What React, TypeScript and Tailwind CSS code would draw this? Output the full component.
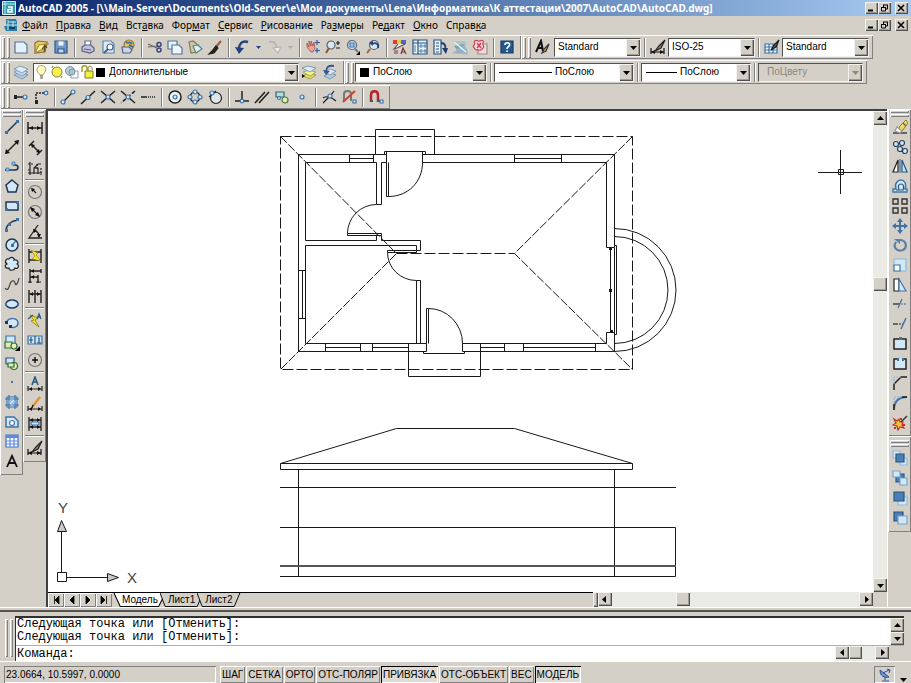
import React, { useState } from 'react';
import type { FC, ReactNode } from 'react';

const RAISED = 'bg-[#d4d0c8] shadow-[inset_1px_1px_0_#ffffff,inset_-1px_-1px_0_#808080]';
const BUTTON = 'bg-[#d4d0c8] shadow-[inset_1px_1px_0_#f4f2ee,inset_-1px_-1px_0_#505050,inset_-2px_-2px_0_#a09c94]';

const NAVY = '#1d3557';
const BLUE = '#3f73a8';
const PALE = '#d3e8f7';
const SKY = '#8fb8dc';

const icons: Record<string, ReactNode> = {
  // standard
  New: <path d="M2 3h9l3 3v8H2z" fill="#e4f0fa" stroke="#53749c" />,
  Open: (
    <>
      <path d="M2 4l3-2 9 1-2 10-10 1z" fill="#e9c95c" stroke="#8a7433" />
      <path d="M2 14L6 6l9-1-5 5z" fill="#fff2b0" stroke="#a88c3c" />
      <path d="M9 10l3-4 2 3M12 7l-1 6" stroke="#5b4a1d" />
    </>
  ),
  Save: (
    <>
      <path d="M2 2h12v12H2z" fill="#6d98c8" stroke="#33588a" />
      <path d="M5 2h6v5H5z" fill="#eef5fb" stroke="#7d9cc0" />
      <path d="M5 10h6v4H5z" fill="#c5d9ee" stroke="#33588a" />
    </>
  ),
  Plot: (
    <>
      <path d="M5 7V2h6l-1 5" fill="#fff" stroke="#6a6d92" />
      <path d="M2 8l3-2h6l3 3v3l-4 2-8-2z" fill="#c2c4df" stroke="#5a5d85" />
      <path d="M4 10l7 1" stroke="#5a5d85" />
    </>
  ),
  Preview: (
    <>
      <path d="M3 2h8l3 3v9H3z" fill="#dcebf7" stroke="#6584a6" />
      <circle cx="10" cy="8" r="3" fill="#fff" stroke="#44658f" />
      <path d="M8 10l-4 4" stroke="#44658f" strokeWidth="2" />
    </>
  ),
  Publish: (
    <>
      <circle cx="9" cy="6" r="5" fill="#f0c64c" stroke="#9b7a2b" />
      <path d="M6 3c2 2 4-1 6 2M9 6l4 2" stroke="#3f73a8" strokeWidth="2" />
      <path d="M2 8h7l3 3-2 3H3z" fill="#c8d5ec" stroke="#4d6490" />
    </>
  ),
  Cut: (
    <>
      <path d="M1 5l9 4M1 8l10-1" stroke="#666" />
      <circle cx="12" cy="5.500" r="2" stroke="#3b4478" strokeWidth="1.500" />
      <circle cx="12" cy="11" r="2" stroke="#3b4478" strokeWidth="1.500" />
    </>
  ),
  Copy: (
    <>
      <path d="M1 2h9v8H1z" fill="#e4f0fa" stroke="#53749c" />
      <path d="M5 6h7l3 3v6H5z" fill="#eef6fc" stroke="#53749c" />
    </>
  ),
  Paste: (
    <>
      <path d="M2 3l4-1 5 4-1 7-6 1z" fill="#cfc7a4" stroke="#807a58" />
      <path d="M6 7l5-1 4 4-6 4z" fill="#dff1f0" stroke="#5a8a88" />
    </>
  ),
  Match: (
    <>
      <path d="M14 2L8 9" stroke="#9a5b2d" strokeWidth="2" />
      <path d="M9 7l2 2-4 5-5 1 3-3z" fill="#222" />
    </>
  ),
  Undo: (
    <>
      <path d="M14 3C8 1 5 5 5 10" stroke="#22427c" strokeWidth="2.400" />
      <path d="M1 8l4 7 5-6z" fill="#22427c" stroke="none" />
    </>
  ),
  Redo: (
    <>
      <path d="M3 3c5-1 8 2 8 7" stroke="#b8b8b8" strokeWidth="2" />
      <path d="M7 9l5 5 3-6z" fill="#ececec" stroke="#b8b8b8" />
    </>
  ),
  Pan: (
    <>
      <path d="M2 4l2 4V2l2 5V2l2 5 1-4 1 6-2 4H6L2 8z" fill="#e9a59a" stroke="#a84b44" strokeWidth=".8" />
      <path d="M12 1v5M10 3.500h5M12 9v5M10 11.500h5" stroke="#2d5c9e" />
    </>
  ),
  ZoomRealtime: (
    <>
      <circle cx="6" cy="6" r="4" fill="#d8e6f2" stroke="#53606e" />
      <path d="M4 9l-3 5" stroke="#8a5a31" strokeWidth="2" />
      <path d="M11 4h4M13 2v4M11 9h4" stroke="#222" />
    </>
  ),
  ZoomWindow: (
    <>
      <circle cx="7" cy="6" r="4.500" fill="#d8e6f2" stroke="#53606e" />
      <path d="M5 4h4v4H5z" stroke={BLUE} fill="#a9cce6" />
      <path d="M10 10l3 3" stroke="#5d7ba3" strokeWidth="2" />
      <path d="M15 12v4h-4z" fill="#000" stroke="none" />
    </>
  ),
  ZoomPrevious: (
    <>
      <circle cx="9" cy="6" r="4.500" fill="#d8e6f2" stroke="#53606e" />
      <path d="M5 10l-3 4" stroke="#9a6838" strokeWidth="2" />
      <path d="M13 9c1-4-2-6-6-4" stroke="#22427c" strokeWidth="1.800" />
      <path d="M4 4l4-2v5z" fill="#22427c" stroke="none" />
    </>
  ),
  Properties: (
    <>
      <path d="M1 1h4v4H1z" fill="#e23b3b" stroke="none" />
      <path d="M5 1h4v4H5z" fill="#e8cf3b" stroke="none" />
      <path d="M9 1h5v4H9z" fill="#4c62d0" stroke="none" />
      <path d="M13 5L5 9l-3 1 4-5" fill="#eee" stroke="#555" />
      <path d="M2 12h4M2 14h4M9 15l2-6 3 6M10 13h3" stroke="#7c2f3c" />
    </>
  ),
  DesignCenter: (
    <>
      <path d="M1 1h14v14H1z" fill="#e8f1f8" stroke="#27557f" />
      <path d="M6 1v14M1 4h14" stroke="#27557f" />
      <path d="M3 6v7M8 6h2v2H8zM12 6h2v2h-2zM8 11h2v2H8zM12 11h2v2h-2z" stroke="#3f73a8" strokeWidth=".9" />
    </>
  ),
  ToolPalettes: (
    <>
      <path d="M2 1h7v14H2z" fill="#e8f1f8" stroke="#27557f" />
      <path d="M4 4h3M4 7h3M4 10h3M4 13h3" stroke="#27557f" />
      <path d="M9 4c4 0 5 3 4 7" stroke="#1e3c70" strokeWidth="1.800" />
      <path d="M10 9l4 6 2-6z" fill="#1e3c70" stroke="none" />
    </>
  ),
  SheetSet: (
    <>
      <path d="M1 2l12 0 2 4-11 1z" fill="#a9c6cf" stroke="none" />
      <path d="M2 7l10-2 2 4-9 2z" fill="#7fa0ad" stroke="none" />
      <path d="M1 14l11-7 3 4v4z" fill="#8fb1c4" stroke="#a8bcc6" />
      <path d="M2 3l12 10" stroke="#f4f7f8" />
    </>
  ),
  Markup: (
    <>
      <path d="M6 5h9v10H6z" fill="#eadcdc" stroke="#a38c8c" />
      <path d="M3 2c2-2 3 1 5 0s4-1 3 2 2 3 0 5-2 3-4 2-3 1-4-1-3-2-1-4-1-2 1-4z" fill="#f9dfe2" stroke="#d03f52" />
      <path d="M5 4l4 5M9 4L5 9" stroke="#d03f52" strokeWidth="1.500" />
    </>
  ),
  Help: (
    <>
      <path d="M2 2h12v12H2z" fill="#24598f" stroke="#143a66" />
      <path d="M6 6c0-3 5-3 4.500 0C10 8 8 8 8 10M8 11.500v1.500" stroke="#fff" strokeWidth="1.700" />
    </>
  ),
  TextStyle: (
    <>
      <path d="M2 13L7 2l2 10M4 9h5" stroke="#111" strokeWidth="2" />
      <path d="M15 5l-5 5-2 4 4-2z" fill="#b8a07c" stroke="#333" />
    </>
  ),
  DimStyle: (
    <>
      <path d="M1 9v6M14 9v6M1 13h13" stroke="#111" />
      <path d="M1 13l4-2v4zM14 13l-4-2v4z" fill="#111" stroke="none" />
      <path d="M15 1L9 7l-4 5 6-3z" fill="#8d8577" stroke="#222" />
    </>
  ),
  TableStyle: (
    <>
      <path d="M1 5h12v9H1z" fill="#eef6fc" stroke="#3f73a8" />
      <path d="M1 8h12M5 5v9M9 5v9M1 11h12" stroke="#3f73a8" />
      <path d="M15 1l-5 5-3 5 5-3z" fill="#555" stroke="#222" />
    </>
  ),
  // layers
  Layers: (
    <>
      <path d="M1 11l6-3 8 3-6 4z" fill="#b6cde2" stroke="#5d7fa3" strokeWidth=".7" />
      <path d="M1 8l6-3 8 3-6 4z" fill="#c9dcec" stroke="#5d7fa3" strokeWidth=".7" />
      <path d="M1 5l6-3 8 3-6 4z" fill="#dcebf6" stroke="#5d7fa3" strokeWidth=".7" />
    </>
  ),
  LayerCurrent: (
    <>
      <path d="M2 12l6-3 7 2-6 4z" fill="#e7e05a" stroke="#8c8a31" strokeWidth=".7" />
      <path d="M2 8l6-2 7 2-6 4z" fill="#f7f39a" stroke="#8c8a31" strokeWidth=".7" />
      <path d="M1 4l6-2 8 2-6 4z" fill="#dcebf6" stroke="#5d7fa3" strokeWidth=".7" />
      <path d="M1 10v4l3-2z" fill="#111" stroke="none" />
    </>
  ),
  LayerPrevious: (
    <>
      <path d="M3 12l6-3 6 2-6 4z" fill="#b6cde2" stroke="#5d7fa3" strokeWidth=".7" />
      <path d="M3 8l6-3 6 2-6 4z" fill="#dcebf6" stroke="#5d7fa3" strokeWidth=".7" />
      <path d="M13 2C8 1 5 3 5 8" stroke="#2f568e" strokeWidth="1.800" />
      <path d="M2 6l3 5 4-4z" fill="#2f568e" stroke="none" />
    </>
  ),
  // object snap
  TempTrack: (
    <>
      <path d="M1 8h9" strokeWidth="1.500" />
      <path d="M1 6h3v4H1z" fill="#222" stroke="none" />
      <circle cx="12" cy="8" r="2" fill={PALE} stroke={BLUE} />
    </>
  ),
  SnapFrom: (
    <>
      <path d="M3 13V4h8" strokeDasharray="2 1" strokeWidth="1.500" />
      <path d="M2 11h3v4H2z" fill="#222" stroke="none" />
      <circle cx="13" cy="4" r="1.800" fill={PALE} stroke={BLUE} />
    </>
  ),
  Endpoint: (
    <>
      <path d="M3 13L13 3" />
      <circle cx="13" cy="3" r="2" fill={PALE} stroke={BLUE} />
      <circle cx="3" cy="13" r="2" fill={PALE} stroke={BLUE} />
    </>
  ),
  Midpoint: (
    <>
      <path d="M1 15L15 2" strokeWidth="1.500" />
      <circle cx="8" cy="8.500" r="2" fill={PALE} stroke={BLUE} />
    </>
  ),
  Intersection: (
    <>
      <path d="M1 2l14 12M15 2L1 14" strokeWidth="1.500" />
      <circle cx="8" cy="8" r="2" fill={PALE} stroke={BLUE} />
    </>
  ),
  ApparentIntersect: (
    <>
      <path d="M1 2l14 12" strokeWidth="1.500" />
      <path d="M15 2L1 14" strokeWidth="1.500" strokeDasharray="4 2" />
      <circle cx="8" cy="8" r="2" fill={PALE} stroke={BLUE} />
    </>
  ),
  Extension: <path d="M1 8h6M8 8h1M10 8h1M12 8h1M14 8h1" strokeWidth="1.500" />,
  Center: (
    <>
      <circle cx="8" cy="8" r="6" fill="#eef4f8" stroke="#222" strokeWidth="1.500" />
      <circle cx="8" cy="8" r="2" fill={PALE} stroke={BLUE} />
    </>
  ),
  Quadrant: (
    <>
      <circle cx="8" cy="8" r="5" />
      <circle cx="8" cy="3" r="2" fill={PALE} stroke={BLUE} />
      <circle cx="8" cy="13" r="2" fill={PALE} stroke={BLUE} />
      <circle cx="3" cy="8" r="2" fill={PALE} stroke={BLUE} />
      <circle cx="13" cy="8" r="2" fill={PALE} stroke={BLUE} />
    </>
  ),
  Tangent: (
    <>
      <circle cx="9" cy="9" r="5.500" fill="#dfe6ea" stroke="#222" />
      <path d="M2 8l7-6" />
      <circle cx="5" cy="4" r="2" fill={PALE} stroke={BLUE} />
    </>
  ),
  Perpendicular: (
    <>
      <path d="M8 2v10M1 12h14" strokeWidth="1.500" />
      <circle cx="8" cy="12" r="1.800" fill={PALE} stroke={BLUE} />
    </>
  ),
  Parallel: <path d="M1 14L11 3M5 14L15 3" strokeWidth="1.600" />,
  SnapInsert: (
    <>
      <path d="M2 3h8v5H2z" fill="#b9dbe8" stroke="#2f6f5c" />
      <circle cx="11" cy="11" r="3" fill="#dcebb4" stroke="#4f7d3a" />
      <circle cx="5" cy="9" r="1.500" fill={PALE} stroke={BLUE} />
    </>
  ),
  Node: <circle cx="8" cy="8" r="2" fill={PALE} stroke={BLUE} />,
  Nearest: (
    <>
      <path d="M2 14L10 6l3-4M2 9c5-3 9 0 13 3" />
      <circle cx="9" cy="7" r="2" fill={PALE} stroke={BLUE} />
    </>
  ),
  SnapNone: (
    <>
      <path d="M3 12V5c0-4 7-4 7 0v7" stroke="#777" strokeWidth="2" />
      <path d="M14 2L2 13" stroke="#c9462c" strokeWidth="2" />
      <path d="M12 11h3v3h-3z" fill={PALE} stroke={BLUE} />
    </>
  ),
  SnapSettings: (
    <>
      <path d="M3 13V6c0-5 7-5 7 0v7" stroke="#b3262c" strokeWidth="2.500" />
      <path d="M2 12h3M9 12h3" stroke="#555" strokeWidth="2" />
      <path d="M12 11h3v3h-3z" fill={PALE} stroke={BLUE} />
    </>
  ),
  // draw
  Line: (
    <>
      <path d="M3 13L13 3" stroke={NAVY} strokeWidth="1.500" />
      <path d="M1 12h3v3H1zM12 1h3v3h-3z" fill={BLUE} stroke="none" />
    </>
  ),
  XLine: (
    <>
      <path d="M2 14L14 2" strokeWidth="1.500" />
      <path d="M1 15l1-5 4 4zM15 1l-5 1 4 4z" fill="#111" stroke="none" />
    </>
  ),
  Polyline: (
    <>
      <path d="M1 12h10c4 0 4-5 0-5H9" stroke={NAVY} strokeWidth="1.500" />
      <path d="M2 10h3v3H2zM8 4h3v3H8z" fill={SKY} stroke={BLUE} strokeWidth=".7" />
    </>
  ),
  Polygon: <path d="M8 2l6 5-2 7H4L2 7z" fill={PALE} stroke={NAVY} strokeWidth="1.500" />,
  Rectangle: (
    <>
      <path d="M2 4h12v8H2z" fill={PALE} stroke={NAVY} strokeWidth="1.500" />
      <path d="M1 10h3v3H1zM12 3h3v3h-3z" fill={BLUE} stroke="none" />
    </>
  ),
  Arc: (
    <>
      <path d="M2 14C2 8 7 4 14 3" stroke={NAVY} strokeWidth="1.500" />
      <path d="M1 12h3v3H1zM12 1h3v3h-3zM4 6h3v3H4z" fill={BLUE} stroke="none" />
    </>
  ),
  Circle: (
    <>
      <circle cx="8" cy="8" r="6" fill={PALE} stroke={NAVY} strokeWidth="1.500" />
      <path d="M8 8l4-4" stroke={BLUE} />
      <path d="M7 7h3v3H7z" fill={BLUE} stroke="none" />
    </>
  ),
  RevCloud: (
    <path d="M5 3c2-3 6-1 5 1 4-1 5 3 3 4 3 1 1 6-2 4-1 3-6 3-6 0-4 1-5-3-2-4-3-2-1-6 2-5z" fill={PALE} stroke="#222" />
  ),
  Spline: <path d="M1 12c3 4 4-1 5-4s4-5 5-1 3 0 4-5" stroke="#444" />,
  Ellipse: (
    <>
      <ellipse cx="8" cy="8" rx="6" ry="4" fill={PALE} stroke={NAVY} strokeWidth="1.500" />
      <path d="M1 7h2v3H1zM13 7h2v3h-2zM7 3h2v2H7z" fill={BLUE} stroke="none" />
    </>
  ),
  EllipseArc: (
    <>
      <path d="M3 6c3-4 11-3 11 2 0 4-4 5-8 4" fill={PALE} stroke={BLUE} strokeWidth="1.500" />
      <path d="M1 6h3v3H1zM5 10h3v3H5z" fill={NAVY} stroke="none" />
    </>
  ),
  InsertBlock: (
    <>
      <path d="M2 1h9v8H2z" fill={PALE} stroke={BLUE} />
      <path d="M1 7h7v6H1z" fill="#d7edb1" stroke="#346b3a" />
      <circle cx="10" cy="11" r="3" fill="#e7f2b0" stroke="#346b3a" />
      <path d="M16 11v5h-5z" fill="#000" stroke="none" />
    </>
  ),
  MakeBlock: (
    <>
      <path d="M2 3h8v6H2z" fill={PALE} stroke="#27557f" />
      <circle cx="10" cy="11" r="3.500" fill="#e7f2b0" stroke="#346b3a" />
      <path d="M4 8h6v4H4z" fill="#d7edb1" stroke="#346b3a" />
    </>
  ),
  Point: <path d="M7 7h2v2H7z" fill={BLUE} stroke="none" />,
  Hatch: (
    <>
      <path d="M3 3h10v10H3z" fill={PALE} stroke={BLUE} />
      <path d="M1 5h14M1 11h14M5 1v14M11 1v14" stroke={BLUE} />
      <path d="M5 9l4-4M7 11l4-4" stroke={SKY} />
    </>
  ),
  Region: (
    <>
      <path d="M2 13V3h8l4 4v6z" fill={PALE} stroke={BLUE} strokeWidth="1.500" />
      <circle cx="8" cy="9" r="2.500" fill="#fff" stroke={BLUE} />
    </>
  ),
  Table: (
    <>
      <path d="M2 2h12v12H2z" fill="#fff" stroke="#3f73d0" />
      <path d="M2 2h12v3H2z" fill="#5a8be0" stroke="none" />
      <path d="M2 8h12M2 11h12M6 2v12M10 2v12" stroke="#5a8be0" />
    </>
  ),
  MText: <path d="M3 14L8 3l5 11M5 10h6" stroke="#111" strokeWidth="1.800" />,
  // dimension
  DimLinear: (
    <>
      <path d="M1 2v12M15 2v12M1 8h14" strokeWidth="1.500" />
      <path d="M2 8l4-2v4zM14 8l-4-2v4z" fill="#111" stroke="none" />
    </>
  ),
  DimAligned: (
    <>
      <path d="M2 6l5-5M10 15l5-5M4 4l8 8" strokeWidth="1.500" />
      <path d="M4 4l4 1-3 3zM13 13l-4-1 3-3z" fill="#111" stroke="none" />
    </>
  ),
  DimOrdinate: (
    <>
      <path d="M3 2v13M1 13h14M7 14V8h4v6M7 8l4-4h3" />
      <path d="M1 4h5M10 4v6M14 8v7M1 10h2" strokeDasharray="2 1" />
    </>
  ),
  DimRadius: (
    <>
      <circle cx="8" cy="8" r="6.500" stroke="#777" />
      <path d="M9 9L5 5" />
      <path d="M4 4l4 1-3 3z" fill="#111" stroke="none" />
    </>
  ),
  DimDiameter: (
    <>
      <circle cx="8" cy="8" r="6.500" stroke="#777" />
      <path d="M4 4l8 8" />
      <path d="M3 3l5 2-3 3zM13 13l-5-2 3-3z" fill="#111" stroke="none" />
    </>
  ),
  DimAngular: (
    <>
      <path d="M11 1L2 14h13M7 7c3 0 5 2 5 6" strokeWidth="1.300" />
      <path d="M6 5l4 1-3 3zM12 14l-2-4h4z" fill="#111" stroke="none" />
    </>
  ),
  QuickDim: (
    <>
      <path d="M2 1v14M14 1v14M2 4h12M2 12h12" strokeWidth="1.400" />
      <path d="M4 2l7 3-2 2 5 6-9-2 3-3z" fill="#f3e32a" stroke="#8a7d10" strokeWidth=".6" />
    </>
  ),
  Baseline: (
    <>
      <path d="M3 1v14M14 1v4M3 3h11M3 9h8M11 7v8" strokeWidth="1.400" />
      <path d="M4 3l3-2v4zM4 9l3-2v4z" fill="#111" stroke="none" />
      <path d="M1 14h4M9 14h5" />
    </>
  ),
  ContinueDim: (
    <>
      <path d="M2 2v13M8 2v13M14 2v13M2 6h12" strokeWidth="1.400" />
      <path d="M3 6l3-2v4zM13 6l-3-2v4z" fill="#111" stroke="none" />
    </>
  ),
  QuickLeader: (
    <>
      <path d="M3 3l8 3-3 2 4 7-8-6 3-1z" fill="#f3e32a" stroke="#8a7d10" strokeWidth=".8" />
      <path d="M1 7l5-4M10 7l2-5 2 5M11 5h3" stroke="#315c7c" strokeWidth="1.300" />
    </>
  ),
  Tolerance: (
    <>
      <path d="M1 4h14v8H1z" fill="#cfe3f5" stroke="#3f73a8" />
      <path d="M8 4v8M4 5v6M2 8h4M11 6h1v5M10 11h4" stroke="#27557f" />
    </>
  ),
  CenterMark: (
    <>
      <circle cx="8" cy="8" r="6.500" stroke="#777" />
      <path d="M8 5v6M5 8h6" stroke="#111" strokeWidth="1.500" />
    </>
  ),
  DimEdit: (
    <>
      <path d="M1 10v5M15 10v5M1 13h14" />
      <path d="M2 13l3-2v4zM14 13l-3-2v4z" fill="#111" stroke="none" />
      <path d="M5 9l3-8 3 8M6 6h4" stroke="#27557f" strokeWidth="1.500" />
    </>
  ),
  DimTextEdit: (
    <>
      <path d="M1 10v5M15 10v5M1 13h14" />
      <path d="M2 13l3-2v4zM14 13l-3-2v4z" fill="#111" stroke="none" />
      <path d="M13 1L6 10" stroke="#e0952e" strokeWidth="2.500" />
      <path d="M6 9l-1 3" stroke="#222" strokeWidth="1.500" />
    </>
  ),
  DimUpdate: (
    <>
      <path d="M2 1v14M14 1v14M2 4h12M2 11h12" strokeWidth="1.300" />
      <path d="M4 6h8v3H4z" fill="#cfe3f5" stroke="#3f73a8" />
      <path d="M3 4l3-2v4zM13 4l-3-2v4zM3 11l3-2v4zM13 11l-3-2v4z" fill="#111" stroke="none" />
    </>
  ),
  // modify
  Erase: (
    <>
      <path d="M1 14h14" />
      <path d="M14 1L8 7l-2 4 4 1 6-8z" fill="#f5d95b" stroke="#7a6020" strokeWidth=".8" />
      <path d="M5 8l5 4-2 2-5-2z" fill="#fff" stroke="#999" />
      <path d="M11 4l3 3" stroke="#5b6f8c" strokeWidth="1.500" />
    </>
  ),
  CopyObject: (
    <>
      <circle cx="4" cy="5" r="2.500" fill={PALE} stroke="#27405c" />
      <circle cx="10" cy="4" r="2.500" fill={PALE} stroke="#27405c" />
      <circle cx="8" cy="10" r="2.500" fill={PALE} stroke="#27405c" />
      <circle cx="13" cy="12" r="2.500" fill={PALE} stroke="#27405c" />
    </>
  ),
  Mirror: (
    <>
      <path d="M6 2v12H1z" fill="#fff" stroke="#222" />
      <path d="M10 2v12h5z" fill={PALE} stroke="#27557f" />
      <path d="M8 1v14" stroke={BLUE} />
    </>
  ),
  Offset: (
    <>
      <path d="M1 14v-3h3c-2-6 2-9 5-9s6 3 4 9h2v3z" fill={PALE} stroke={BLUE} strokeWidth="1.400" />
      <path d="M4 12h7c1-3 1-6-2-6-3 0-3 3-2 6" stroke="#27557f" />
    </>
  ),
  Array: <path d="M1 1h5v5H1zM10 1h5v5h-5zM1 10h5v5H1zM10 10h5v5h-5z" stroke="#333" strokeWidth="1.400" />,
  Move: (
    <>
      <path d="M8 3v10M3 8h10" stroke={BLUE} strokeWidth="2" />
      <path d="M8 0l3 4H5zM8 16l3-4H5zM0 8l4-3v6zM16 8l-4-3v6z" fill={BLUE} stroke="none" />
    </>
  ),
  Rotate: (
    <>
      <path d="M4 5c-4 6 2 10 7 8 5-3 3-10-3-10" stroke="#5b82a9" strokeWidth="2.200" />
      <path d="M2 2h6v5z" fill="#5b82a9" stroke="none" />
    </>
  ),
  Scale: (
    <>
      <path d="M2 2h12v12H2z" fill={PALE} stroke={SKY} />
      <path d="M2 8h6v6H2z" fill="#fff" stroke={BLUE} />
    </>
  ),
  Stretch: (
    <>
      <path d="M2 2h5v12H2z" fill="#fff" stroke="#222" />
      <path d="M7 2l7 12H7z" fill={PALE} stroke={BLUE} />
    </>
  ),
  Trim: (
    <>
      <path d="M1 8h7" />
      <path d="M9 8h6" strokeDasharray="2 1" stroke={BLUE} />
      <path d="M6 12l4-9" stroke={BLUE} />
    </>
  ),
  Extend: (
    <>
      <path d="M1 8h5" />
      <path d="M7 8h4" strokeDasharray="2 1" />
      <path d="M9 13l5-11" stroke={BLUE} strokeWidth="1.500" />
    </>
  ),
  BreakPoint: (
    <>
      <path d="M2 3h12v10H2z" fill={PALE} stroke="#222" strokeWidth="1.500" />
      <path d="M7 1h3v3H7z" fill={BLUE} stroke="none" />
    </>
  ),
  Break: (
    <>
      <path d="M5 3H2v10h12V3h-3" fill={PALE} stroke="#222" strokeWidth="1.500" />
      <path d="M5 2h2v3H5zM10 2h2v3h-2z" fill={BLUE} stroke="none" />
    </>
  ),
  Chamfer: (
    <>
      <path d="M2 15V9l7-7h6" strokeWidth="1.500" />
      <path d="M2 9V2h7" stroke={SKY} strokeDasharray="2 1" />
    </>
  ),
  Fillet: (
    <>
      <path d="M2 15c0-8 4-13 13-13" stroke={BLUE} strokeWidth="2" />
      <path d="M2 15V9M10 2h5" strokeWidth="1.500" />
      <path d="M2 8V2h7" stroke={SKY} strokeDasharray="2 1" />
    </>
  ),
  Explode: (
    <>
      <path d="M2 4l3 2 2-2 1 3 3 0-1 3 2 3-4-1-2 3-1-4-4-1 3-2z" fill="#f3c43a" stroke="#c2362b" />
      <path d="M10 9h3v2h-3zM2 12h2v2H2zM8 3h2v2H8z" fill="#c2362b" stroke="none" />
      <path d="M15 1l-6 6" stroke="#333" strokeWidth="1.500" />
    </>
  ),
  // draw order
  BringFront: (
    <>
      <path d="M1 1h7v7H1zM8 8h7v7H8z" fill={PALE} stroke={SKY} />
      <path d="M4 4h8v8H4z" fill="#4b7fb6" stroke="#27557f" />
    </>
  ),
  SendBack: (
    <>
      <path d="M4 4h8v8H4z" fill="#4b7fb6" stroke="#27557f" />
      <path d="M1 1h7v6H1zM8 8h7v7H8z" fill={PALE} stroke="#7ba4c9" />
    </>
  ),
  BringAbove: (
    <>
      <path d="M6 7h9v8H6z" fill={PALE} stroke={SKY} />
      <path d="M2 2h10v9H2z" fill="#4b7fb6" stroke="#27557f" />
    </>
  ),
  SendUnder: (
    <>
      <path d="M2 2h9v9H2z" fill="#4b7fb6" stroke="#27557f" />
      <path d="M6 6h9v8H6z" fill={PALE} stroke="#7ba4c9" />
    </>
  ),
};

const Icon: FC<{ name: string }> = ({ name }) => (
  <svg width="16" height="16" viewBox="0 0 16 16" fill="none" stroke="#222" strokeWidth="1.200" aria-hidden="true">
    {icons[name]}
  </svg>
);

const ToolButton: FC<{ name: string; size?: string }> = ({ name, size = 'h-5' }) => (
  <button type="button" aria-label={name} className={`flex w-5 shrink-0 items-center justify-center ${size}`}>
    <Icon name={name} />
  </button>
);

const ToolGroup: FC<{ names: string[]; size?: string }> = ({ names, size }) => (
  <>
    {names.map((name) => (
      <ToolButton key={name} name={name} size={size} />
    ))}
  </>
);

const Grip: FC = () => (
  <div className="mr-px flex h-[21px] w-2 shrink-0 gap-[2px]">
    <div className={`w-[3px] ${RAISED}`} />
    <div className={`w-[3px] ${RAISED}`} />
  </div>
);

const Sep: FC = () => (
  <div className="flex w-[7px] shrink-0 justify-center">
    <div className="h-[19px] w-[2px] border-l border-[#808080] bg-white" />
  </div>
);

const FlyoutArrow: FC<{ name: string; color: string }> = ({ name, color }) => (
  <button type="button" aria-label={name} className="flex w-3 shrink-0 items-center justify-center">
    <svg width="5" height="3" viewBox="0 0 5 3">
      <path d="M0 0h5L2.500 3z" fill={color} />
    </svg>
  </button>
);

const Toolbar: FC<{ children: ReactNode; className?: string }> = ({ children, className = '' }) => (
  <div className={`flex h-[24px] shrink-0 items-center pl-[2px] ${RAISED} ${className}`}>{children}</div>
);

const Arrow: FC<{ dir: 'up' | 'down' | 'left' | 'right'; color?: string }> = ({ dir, color = '#000' }) => {
  const shapes = {
    up: 'M0 5h7L3.500 1z',
    down: 'M0 2h7L3.500 6z',
    left: 'M5 0v7L1 3.500z',
    right: 'M2 0v7l4-3.500z',
  };
  return (
    <svg width="7" height="7" viewBox="0 0 7 7" aria-hidden="true">
      <path d={shapes[dir]} fill={color} />
    </svg>
  );
};

const ScrollButton: FC<{ dir: 'up' | 'down' | 'left' | 'right'; label: string; className?: string }> = ({
  dir,
  label,
  className = 'h-[14px] w-[14px]',
}) => (
  <button type="button" aria-label={label} className={`flex shrink-0 items-center justify-center ${BUTTON} ${className}`}>
    <Arrow dir={dir} />
  </button>
);

interface ComboProps {
  label: string;
  value: string;
  className: string;
  textClass?: string;
  disabled?: boolean;
  children?: ReactNode;
}

const Combo: FC<ComboProps> = ({ label, value, className, textClass = 'pl-[3px]', disabled = false, children }) => (
  <div
    className={`relative h-[19px] shrink-0 border border-t-[#505050] border-r-[#f4f2ee] border-b-[#f4f2ee] border-l-[#505050] ${
      disabled ? 'bg-[#d4d0c8]' : 'bg-white'
    } ${className}`}
  >
    <select
      aria-label={label}
      disabled={disabled}
      className={`h-full w-full appearance-none bg-transparent pr-4 text-[10px] leading-4 outline-none ${
        disabled ? 'text-[#8c8880] opacity-100' : 'text-black'
      } ${textClass}`}
    >
      <option>{value}</option>
    </select>
    <div className="pointer-events-none absolute inset-y-0 left-0 flex items-center">{children}</div>
    <div
      className={`pointer-events-none absolute inset-y-0 right-0 flex w-[14px] items-center justify-center ${BUTTON}`}
    >
      <Arrow dir="down" color={disabled ? '#8c8880' : '#000'} />
    </div>
  </div>
);

const LayerState: FC = () => (
  <svg width="66" height="16" viewBox="0 0 66 16" fill="none" aria-hidden="true">
    <path d="M6 11C3 8 2 6 4 3c2-2 5-2 7 0 2 3 0 5-2 8z" fill="#fdfac0" stroke="#a8a25a" />
    <path d="M6 12h3M6 14h3" stroke="#555" />
    <circle cx="23" cy="8" r="5" fill="#f8f04a" stroke="#8a8440" />
    <path d="M19 2l-1 2M27 14l1-2" stroke="#8a8440" />
    <circle cx="36" cy="7" r="4.500" fill="#b7ccd4" stroke="#7b98a4" />
    <path d="M37 7h7v7h-7z" fill="#fff" stroke="#8da0a8" />
    <circle cx="38" cy="8" r="3" fill="#a8c3ce" stroke="#7b98a4" />
    <path d="M48 8V4c0-3 5-3 5 0v2" stroke="#a5a222" strokeWidth="1.500" />
    <path d="M51 7h8v7h-8z" fill="#f3ef3a" stroke="#7c7a20" />
    <path d="M54 7V4c1-3 5-2 4 2" stroke="#7c7a20" />
  </svg>
);

const WindowButtons: FC<{ target: string }> = ({ target }) => {
  const base = `flex h-[12px] w-[13px] items-center justify-center ${BUTTON}`;
  return (
    <div className="flex shrink-0 items-center">
      <button type="button" aria-label={`Minimize ${target}`} className={base}>
        <svg width="9" height="8" viewBox="0 0 9 8"><path d="M1 6.500h5" stroke="#000" strokeWidth="2" /></svg>
      </button>
      <button type="button" aria-label={`Restore ${target}`} className={base}>
        <svg width="9" height="8" viewBox="0 0 9 8" fill="none" stroke="#000">
          <path d="M3 1h5M3.500 1v2M7.500 1v4H6M1 3.500h5M1.500 3v4h4V3" />
        </svg>
      </button>
      <button type="button" aria-label={`Close ${target}`} className={`ml-1 ${base}`}>
        <svg width="9" height="8" viewBox="0 0 9 8"><path d="M1 1l6 6M7 1L1 7" stroke="#000" strokeWidth="1.600" /></svg>
      </button>
    </div>
  );
};

// [before, accelerator letter, after]
const menus: [string, string, string][] = [
  ['', 'Ф', 'айл'],
  ['', 'П', 'равка'],
  ['', 'В', 'ид'],
  ['Вст', 'а', 'вка'],
  ['Фор', 'м', 'ат'],
  ['', 'С', 'ервис'],
  ['', 'Р', 'исование'],
  ['Ра', 'з', 'меры'],
  ['Ре', 'д', 'акт'],
  ['', 'О', 'кно'],
  ['Справ', 'к', 'а'],
];

const drawTools = [
  'Line', 'XLine', 'Polyline', 'Polygon', 'Rectangle', 'Arc', 'Circle', 'RevCloud', 'Spline',
  'Ellipse', 'EllipseArc', 'InsertBlock', 'MakeBlock', 'Point', 'Hatch', 'Region', 'Table', 'MText',
];

const dimTools = [
  ['DimLinear', 'DimAligned', 'DimOrdinate'],
  ['DimRadius', 'DimDiameter', 'DimAngular'],
  ['QuickDim', 'Baseline', 'ContinueDim'],
  ['QuickLeader', 'Tolerance', 'CenterMark'],
  ['DimEdit', 'DimTextEdit', 'DimUpdate'],
  ['DimStyle'],
];

const modifyTools = [
  'Erase', 'CopyObject', 'Mirror', 'Offset', 'Array', 'Move', 'Rotate', 'Scale',
  'Stretch', 'Trim', 'Extend', 'BreakPoint', 'Break', 'Chamfer', 'Fillet', 'Explode',
];

const orderTools = ['BringFront', 'SendBack', 'BringAbove', 'SendUnder'];

const VGrip: FC = () => (
  <div className="mb-px flex w-full shrink-0 flex-col gap-px px-[2px]">
    <div className={`h-[3px] ${RAISED}`} />
    <div className={`h-[3px] ${RAISED}`} />
  </div>
);

const Drawing: FC = () => (
  <svg className="block h-full w-full" fill="none" stroke="#1a1a1a" role="img" aria-label="Floor plan and elevation">
    <g transform="translate(-48 -111)">
      {/* roof in plan */}
      <g strokeDasharray="11 3">
        <path d="M280.500 136.500H632.500V369.500H280.500Z" />
        <path d="M396.500 253.500H514.500" />
        <path d="M280.500 136.500L396.500 253.500L280.500 369.500M632.500 136.500L514.500 253.500L632.500 369.500" strokeDasharray="9 2" />
      </g>
      {/* porches */}
      <path d="M375.500 154.500V129.500H434.500V154.500M408.500 351.500V376.500H480.500V351.500" />
      <path d="M384.500 154V151.500H425.500V154M423.500 351V353.500H464.500V351" />
      {/* outer and inner walls */}
      <path d="M386.500 154.500H298.500V351.500H426.500V343.500M422.500 154.500H614.500V247.500H606.500V162.500H422.500" />
      <path d="M462.500 343.500V351.500H614.500V332.500H606.500V343.500H462.500" />
      <path d="M376.500 162.500H305.500V240.500H376.500V234.500M381.500 162.500H386.500" />
      <path d="M376.500 162.500V204.500H381.500V162.500M381.500 235.500V240.500H420.500V250.500H416.500V245.500H305.500V343.500H426.500" />
      <path d="M416.500 343.500V280.500H420.500V343.500" />
      {/* windows */}
      <path d="M349.500 154.500V162.500M373.500 154.500V162.500M349.500 158.500H373.500M514.500 154.500V162.500M561.500 154.500V162.500M514.500 158.500H561.500" />
      <path d="M298.500 270.500H305.500M298.500 318.500H305.500M302.500 270.500V318.500" />
      <path d="M325.500 343.500V351.500M360.500 343.500V351.500M325.500 347.500H360.500M372.500 343.500V351.500M408.500 343.500V351.500M372.500 347.500H408.500" />
      <path d="M480.500 343.500V351.500M504.500 343.500V351.500M480.500 347.500H504.500M523.500 343.500V351.500M595.500 343.500V351.500M523.500 347.500H595.500" />
      {/* doors */}
      <path d="M386.500 152V196.500H388.500V162.500M422.500 152V162.500C422.500 182 408 196.500 388.500 196.500" />
      <path d="M381.500 233.500H347.500V235.500H381.500ZM347.500 233.500A29 29 0 0 1 376.500 204.500" />
      <path d="M416.500 250.500H387.500V252.500H416.500ZM387.500 252.500A29 28 0 0 0 416.500 280.500" />
      <path d="M426.500 343.500V308.500H428.500V343.500M428.500 308.500A34 35 0 0 1 462.500 343.500" />
      {/* balcony */}
      <path d="M610.500 247.500V332.500M614.500 245.500H616.500V334.500H614.500V247.500" />
      <path d="M609 248h3v2h-3zM609 289h3v3h-3zM610 330h3v2h-3z" fill="#1a1a1a" stroke="none" />
      <path d="M614.500 228.500A61.500 61.500 0 0 1 614.500 351.500M614.500 236.500A53.500 53.500 0 0 1 614.500 343.500" />
      {/* elevation */}
      <path d="M280.500 463.500L396.500 428.500H514.500L632.500 463.500V469.500H280.500ZM280.500 463.500H632.500" />
      <path d="M298.500 469.500V576.500M614.500 469.500V576.500M280 487.500H676M280 527.500H675.500V576.500H280" />
      <path d="M280 566H676" stroke="#555" strokeWidth="2" />
      {/* UCS */}
      <path d="M57.500 572.500H66.500V581.500H57.500ZM61.500 572.500V532M66.500 577.500H107" />
      <path d="M61.500 520.500L57.500 531.500H66.500ZM118.500 577.500L107.500 573.500V581.500Z" fill="#c8c8c8" />
      <text x="58" y="513" fontSize="15" fill="#444" stroke="none">Y</text>
      <text x="127" y="583" fontSize="15" fill="#444" stroke="none">X</text>
      {/* cursor */}
      <path d="M840.500 150V194M818 172.500H862M838.500 169.500H843.500V174.500H838.500Z" />
    </g>
  </svg>
);

const SheetTab: FC<{ name: string; active: boolean; onClick: () => void }> = ({ name, active, onClick }) => (
  <button type="button" onClick={onClick} className="relative -ml-[6px] h-[14px] shrink-0 px-2 text-[10px] leading-[14px]">
    <svg
      className="absolute inset-0 h-full w-full"
      viewBox="0 0 50 14"
      preserveAspectRatio="none"
      fill={active ? '#fff' : '#d4d0c8'}
      stroke="#000"
      aria-hidden="true"
    >
      <path d="M0 0L6 13.500H43L49.500 0" />
    </svg>
    <span className="relative">{name}</span>
  </button>
);

const modes = [
  { name: 'ШАГ', on: false },
  { name: 'СЕТКА', on: false },
  { name: 'ОРТО', on: false },
  { name: 'ОТС-ПОЛЯР', on: false },
  { name: 'ПРИВЯЗКА', on: true },
  { name: 'ОТС-ОБЪЕКТ', on: false },
  { name: 'ВЕС', on: false },
  { name: 'МОДЕЛЬ', on: true },
];

const App: FC = () => {
  const [sheet, setSheet] = useState<string>('Модель');
  const [enabled, setEnabled] = useState<string[]>(modes.filter((m) => m.on).map((m) => m.name));

  const toggleMode = (name: string): void => {
    setEnabled((prev) => (prev.includes(name) ? prev.filter((m) => m !== name) : [...prev, name]));
  };

  return (
    <div className="flex h-screen w-full flex-col overflow-hidden bg-[#d4d0c8] font-['Liberation_Sans',sans-serif] text-[10px] text-black">
      {/* title bar */}
      <header className="flex h-4 shrink-0 items-center bg-linear-to-r from-[#0a246a] to-[#a6caf0] pr-[3px] pl-[2px]">
        <svg width="14" height="14" viewBox="0 0 14 14" fill="none" className="shrink-0" aria-hidden="true">
          <path d="M.5.500h13v13H.5z" fill="#2e9cae" stroke="#d9f0f4" />
          <path d="M3 1v12M1 3h12" stroke="#c2e8ee" />
          <path d="M6 6h4v5H6V8.500h4" stroke="#fff" strokeWidth="1.500" />
        </svg>
        <h1 className="ml-[2px] min-w-0 flex-1 font-['Noto_Sans',sans-serif] text-[10px] leading-4 font-bold whitespace-nowrap text-white">
          AutoCAD 2005 - [\\Main-Server\Documents\Old-Server\e\Мои документы\Lena\Информатика\К аттестации\2007\AutoCAD\AutoCAD.dwg]
        </h1>
        <WindowButtons target="AutoCAD" />
      </header>

      {/* menu */}
      <nav className="flex h-[18px] shrink-0 items-center pr-[3px] pl-1">
        <svg width="14" height="14" viewBox="0 0 14 14" fill="none" className="mr-1 shrink-0" aria-hidden="true">
          <path d="M2 1h10l1 3v9H2l-2-4 2-2z" fill="#2b7fa5" />
          <path d="M4 2v10M1 7h12M9 3v8M4 4h8" stroke="#bfe4f2" />
          <path d="M5 10h6" stroke="#0f3f66" strokeWidth="2" />
        </svg>
        <div className="flex flex-1 gap-2 font-['Noto_Sans',sans-serif]">
          {menus.map(([before, key, after]) => (
            <button key={before + key + after} type="button" className="leading-4">
              {before}
              <span className="underline">{key}</span>
              {after}
            </button>
          ))}
        </div>
        <WindowButtons target="drawing" />
      </nav>

      {/* toolbars */}
      <div className="flex shrink-0 flex-col gap-px pt-px">
        <div className="flex">
          <Toolbar className="pr-1">
            <Grip />
            <ToolGroup names={['New', 'Open', 'Save']} />
            <Sep />
            <ToolGroup names={['Plot', 'Preview', 'Publish']} />
            <Sep />
            <ToolGroup names={['Cut', 'Copy', 'Paste', 'Match']} />
            <Sep />
            <ToolButton name="Undo" />
            <FlyoutArrow name="Undo list" color="#22427c" />
            <ToolButton name="Redo" />
            <FlyoutArrow name="Redo list" color="#b0aca4" />
            <Sep />
            <ToolGroup names={['Pan', 'ZoomRealtime', 'ZoomWindow', 'ZoomPrevious']} />
            <Sep />
            <ToolGroup names={['Properties', 'DesignCenter', 'ToolPalettes', 'SheetSet', 'Markup']} />
            <Sep />
            <ToolButton name="Help" />
          </Toolbar>
          <Toolbar className="pr-1">
            <Grip />
            <ToolButton name="TextStyle" />
            <Combo label="Text style" value="Standard" className="ml-[2px] w-[87px]" />
            <Sep />
            <ToolButton name="DimStyle" />
            <Combo label="Dimension style" value="ISO-25" className="w-[87px]" />
            <Sep />
            <ToolButton name="TableStyle" />
            <Combo label="Table style" value="Standard" className="w-[87px]" />
          </Toolbar>
        </div>

        <div className="flex">
          <Toolbar className="pr-[5px]">
            <Grip />
            <ToolButton name="Layers" />
            <Combo label="Layer" value="Дополнительные" className="ml-[2px] w-[266px]" textClass="pl-[75px]">
              <LayerState />
              <span className="-ml-[4px] h-[9px] w-[9px] bg-black" />
            </Combo>
            <ToolGroup names={['LayerCurrent', 'LayerPrevious']} />
          </Toolbar>
          <Toolbar className="pr-1">
            <Grip />
            <Combo label="Color" value="ПоСлою" className="w-[132px]" textClass="pl-[17px]">
              <span className="ml-1 h-[9px] w-[9px] bg-black" />
            </Combo>
            <Sep />
            <Combo label="Linetype" value="ПоСлою" className="w-[140px]" textClass="pl-[60px]">
              <span className="ml-1 h-px w-[53px] bg-black" />
            </Combo>
            <Sep />
            <Combo label="Lineweight" value="ПоСлою" className="w-[110px]" textClass="pl-[38px]">
              <span className="ml-1 h-px w-[31px] bg-black" />
            </Combo>
            <Sep />
            <Combo label="Plot style" value="ПоЦвету" className="w-[105px]" textClass="pl-2" disabled />
          </Toolbar>
        </div>

        <div className="flex">
          <Toolbar className="pr-1">
            <Grip />
            <ToolGroup names={['TempTrack', 'SnapFrom']} />
            <Sep />
            <ToolGroup names={['Endpoint', 'Midpoint', 'Intersection', 'ApparentIntersect', 'Extension']} />
            <Sep />
            <ToolGroup names={['Center', 'Quadrant', 'Tangent']} />
            <Sep />
            <ToolGroup names={['Perpendicular', 'Parallel', 'SnapInsert', 'Node']} />
            <Sep />
            <ToolGroup names={['Nearest', 'SnapNone']} />
            <Sep />
            <ToolButton name="SnapSettings" />
          </Toolbar>
        </div>
      </div>

      {/* workspace */}
      <div className="flex min-h-0 flex-1">
        <aside className={`flex h-[366px] w-[23px] shrink-0 flex-col items-center pt-px pb-[5px] ${RAISED}`}>
          <VGrip />
          <div className="flex min-h-0 flex-1 flex-col justify-between">
            <ToolGroup names={drawTools} size="h-[18px]" />
          </div>
        </aside>
        <aside className={`flex w-[23px] shrink-0 flex-col items-center self-start pt-px pb-1 ${RAISED}`}>
          <VGrip />
          {dimTools.map((group, i) => (
            <React.Fragment key={group[0]}>
              {i > 0 && (
                <div className="flex h-1 w-full items-center px-[2px]">
                  <div className="h-[2px] w-full border-t border-[#808080] bg-white" />
                </div>
              )}
              <ToolGroup names={group} />
            </React.Fragment>
          ))}
        </aside>

        <main className="flex min-w-0 flex-1 flex-col border-t-2 border-l-2 border-[#404040]">
          <div className="flex min-h-0 flex-1">
            <div className="min-w-0 flex-1 overflow-hidden bg-white">
              <Drawing />
            </div>
            <div className="flex w-[14px] shrink-0 flex-col bg-[#ebebe6]">
              <ScrollButton dir="up" label="Scroll up" />
              <div className="flex-[152]" />
              <div className={`h-[14px] ${BUTTON}`} />
              <div className="flex-[288]" />
              <ScrollButton dir="down" label="Scroll down" />
            </div>
          </div>
          <div className="flex h-[15px] shrink-0">
            <div className="flex min-w-0 flex-[544] border-t border-black">
              {['M2.500 0v8M7 0v8L3 4z', 'M6 0v8L2 4z', 'M2 0v8l4-4z', 'M1 0v8l4-4zM6.500 0v8'].map((d, i) => (
                <button
                  key={d}
                  type="button"
                  aria-label={['First sheet', 'Previous sheet', 'Next sheet', 'Last sheet'][i]}
                  className={`flex h-[14px] w-4 shrink-0 items-center justify-center ${RAISED}`}
                >
                  <svg width="8" height="8" viewBox="0 0 8 8"><path d={d} stroke="#000" fill="#000" strokeWidth=".8" /></svg>
                </button>
              ))}
              <div className="ml-2 flex">
                {['Модель', 'Лист1', 'Лист2'].map((name) => (
                  <SheetTab key={name} name={name} active={sheet === name} onClick={() => setSheet(name)} />
                ))}
              </div>
            </div>
            <div className={`w-[5px] ${BUTTON}`} />
            <div className="flex flex-[275] bg-[#ebebe6]">
              <ScrollButton dir="left" label="Scroll left" />
              <div className="flex-[64]" />
              <div className={`h-[14px] w-[14px] ${BUTTON}`} />
              <div className="flex-[169]" />
              <ScrollButton dir="right" label="Scroll right" />
            </div>
            <div className="w-[14px]" />
          </div>
        </main>

        <aside className="flex w-[24px] shrink-0 flex-col border-l border-white">
          <div className={`flex h-[327px] flex-col items-center pt-px pb-1 ${RAISED}`}>
            <VGrip />
            <div className="flex min-h-0 flex-1 flex-col justify-between">
              <ToolGroup names={modifyTools} size="h-[18px]" />
            </div>
          </div>
          <div className={`flex flex-col items-center pt-1 pb-1 ${RAISED}`}>
            <VGrip />
            <ToolGroup names={orderTools} />
          </div>
        </aside>
      </div>

      {/* command line */}
      <section className="shrink-0 border-t border-white">
        <div className="mt-[2px] h-[2px] bg-[#505050]" />
        <div className="flex h-[49px] items-stretch pt-1 pr-[7px] pl-[5px]">
          <div className="mt-[3px] mr-[2px] flex h-[38px] w-2 shrink-0 gap-[2px]">
            <div className={`w-[3px] ${RAISED}`} />
            <div className={`w-[3px] ${RAISED}`} />
          </div>
          <div className="flex min-w-0 flex-1 flex-col border-t-2 border-l border-[#303030] bg-white font-['Liberation_Mono',monospace] text-[12px]">
            <div className="flex h-[28px] border-b border-[#b0b0b0]">
              <div className="flex-1 pl-px leading-[13px]">
                <p>Следующая точка или [Отменить]:</p>
                <p>Следующая точка или [Отменить]:</p>
              </div>
              <div className="flex w-[14px] flex-col">
                <ScrollButton dir="up" label="History up" className="h-[14px] w-[14px]" />
                <ScrollButton dir="down" label="History down" className="h-[13px] w-[14px]" />
              </div>
            </div>
            <div className="flex h-[15px]">
              <label htmlFor="command" className="pl-px leading-4">Команда:</label>
              <input id="command" className="min-w-0 flex-1 bg-transparent pl-1 outline-none" />
              <div className="flex w-[54px] bg-[#ebebe6]">
                <ScrollButton dir="left" label="Command left" className="h-[13px] w-[14px]" />
                <div className={`h-[13px] w-[13px] ${BUTTON}`} />
                <div className="flex-1" />
                <ScrollButton dir="right" label="Command right" className="h-[13px] w-[14px]" />
              </div>
              <div className="w-[15px] bg-[#d4d0c8]" />
            </div>
          </div>
        </div>
      </section>

      {/* status bar */}
      <footer className="flex h-[22px] shrink-0 items-end border-t border-white pl-1">
        <div className="flex h-[17px] w-[212px] shrink-0 items-center pl-[2px] shadow-[inset_1px_1px_0_#808080,inset_-1px_-1px_0_#ffffff]">
          23.0664, 10.5997, 0.0000
        </div>
        <div className="ml-1 flex gap-px">
          {modes.map(({ name }) => (
            <button
              key={name}
              type="button"
              aria-pressed={enabled.includes(name)}
              onClick={() => toggleMode(name)}
              className={`h-[17px] shrink-0 px-[2px] leading-4 ${
                enabled.includes(name)
                  ? 'bg-[#dedbd4] shadow-[inset_1px_1px_0_#000000,inset_-1px_-1px_0_#ffffff]'
                  : 'shadow-[inset_1px_1px_0_#ffffff,inset_-1px_-1px_0_#808080]'
              }`}
            >
              {name}
            </button>
          ))}
        </div>
        <div className="flex-1" />
        <button
          type="button"
          aria-label="Communication center"
          className="flex h-[17px] w-[21px] items-center justify-center shadow-[inset_1px_1px_0_#808080,inset_-1px_-1px_0_#ffffff]"
        >
          <svg width="14" height="14" viewBox="0 0 14 14" fill="none" aria-hidden="true">
            <path d="M2 2c0 6 4 8 9 7z" fill="#6f93d0" stroke="#2c4f92" />
            <path d="M5 5l6-3M9 1l3 1-1 3M7 9v3M4 13h7" stroke="#2c4f92" />
          </svg>
        </button>
        <button type="button" aria-label="Status menu" className="flex h-[14px] w-[16px] items-end justify-center">
          <Arrow dir="down" />
        </button>
      </footer>
    </div>
  );
};

export default App;
